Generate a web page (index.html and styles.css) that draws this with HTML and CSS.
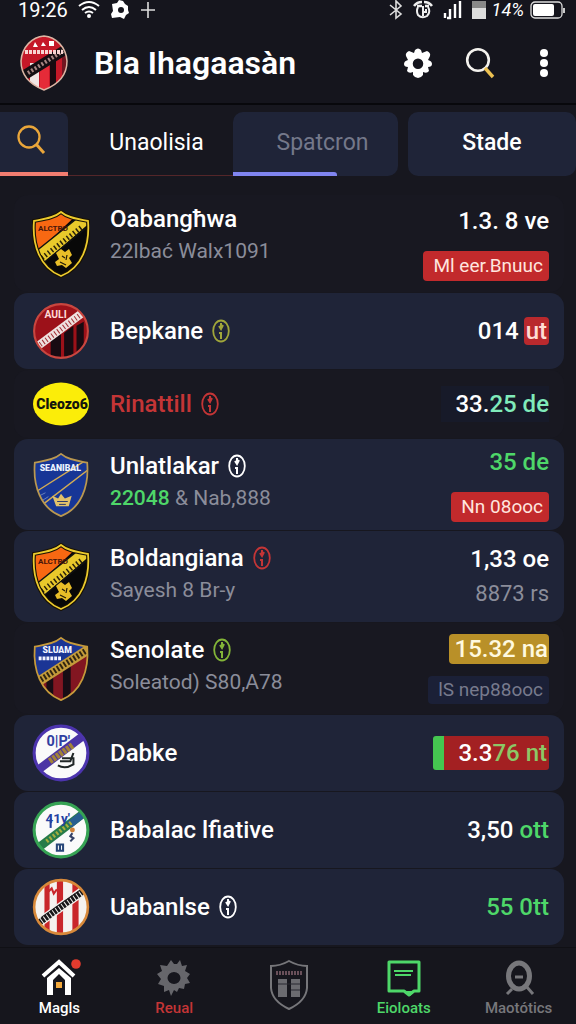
FILE: index.html
```html
<!DOCTYPE html>
<html lang="en">
<head>
<meta charset="utf-8">
<meta name="viewport" content="width=device-width, initial-scale=1">
<title>Bla Ihagaasàn</title>
<link rel="stylesheet" href="styles.css">
</head>
<body>
<svg class="defs" aria-hidden="true">
  <defs>
    <clipPath id="shield"><path d="M29 2C22 8 12 9 2 11C0 35 8 58 29 66C50 58 58 35 56 11C46 9 36 8 29 2Z"/></clipPath>
    <clipPath id="round"><circle cx="28" cy="29" r="26"/></clipPath>
    <symbol id="info" viewBox="0 0 18 24"><ellipse cx="9" cy="12" rx="7.8" ry="10.5" fill="none" stroke="currentColor" stroke-width="1.8"/><path d="M9 4V10M9 13V20M7 7L9 10L11 6M7 14H10" fill="none" stroke="currentColor" stroke-width="2"/></symbol>
    <symbol id="gold-crest" viewBox="0 0 58 68">
      <g clip-path="url(#shield)"><path fill="#080808" d="M0 0H58V68H0Z"/><path fill="#f86812" d="M0 0H50L2 45Z"/><path fill="#e9c92b" d="M-2 46L48 6L60 11L9 55Z"/><path d="M-2 46L48 6M9 55L60 13" stroke="#111" stroke-width="1.5"/><path d="M10 48L51 16" stroke="#29220b" stroke-width="5" stroke-dasharray="1.5 2.5"/></g>
      <path d="M24 43L29 39L33 42L37 39L40 45L37 48L40 53L34 58L30 55L25 56L23 52L27 49Z" fill="#e8be28"/><path d="M30 46L33 48M35 45L34 50M28 52L34 55" fill="none" stroke="#211b0a" stroke-width="1.2"/>
      <text x="6" y="21" font-size="8" font-weight="700" fill="#48150a">ALCTRD</text>
      <path d="M29 2C22 8 12 9 2 11C0 35 8 58 29 66C50 58 58 35 56 11C46 9 36 8 29 2Z" fill="none" stroke="#181104" stroke-width="4"/><path d="M29 2C22 8 12 9 2 11C0 35 8 58 29 66C50 58 58 35 56 11C46 9 36 8 29 2Z" fill="none" stroke="#eccb2d" stroke-width="1.8"/>
    </symbol>
  </defs>
</svg>

<header class="top">
  <div class="status">
    <span class="clock">19:26</span>
    <svg width="22" height="20" viewBox="0 0 22 20" fill="none" stroke="#fff" stroke-width="2"><path d="M1 6Q11-2 21 6M4 10Q11 4 18 10M7 13Q11 10 15 13"/><circle cx="11" cy="16" r="1" fill="#fff"/></svg>
    <svg width="20" height="20" viewBox="0 0 20 20"><path fill="#fff" d="M2 4L7 3L9 0L13 1L15 4L18 6V10L19 13L16 15L14 19L10 17L2 18L1 14L3 11Z"/><circle cx="11" cy="10" r="3" fill="#15151d"/></svg>
    <svg width="16" height="20" viewBox="0 0 16 20" stroke="#ddd" stroke-width="1.6"><path d="M1 10H15M8 2V18"/></svg>
    <span class="spring"></span>
    <svg width="14" height="20" viewBox="0 0 14 20" fill="none" stroke="#ddd" stroke-width="1.6"><path d="M1 5L12 14L7 18V1L12 6L1 15"/></svg>
    <svg width="20" height="20" viewBox="0 0 20 20" fill="none" stroke="#eee"><path d="M5 7Q3 11 5 15Q9 19 14 16Q18 12 15 7" stroke-width="2"/><path stroke-width="2.6" d="M1 6Q4 2 9 2M11 2Q16 2 19 6M4 6H9M12 6H16"/><path stroke-width="2" d="M10 6V16M10 12H13V9"/></svg>
    <svg width="19" height="20" viewBox="0 0 19 20" fill="none" stroke="#fff" stroke-width="2.4"><path d="M2 13V18M7 9V18H4M12 4V18M17 1V18"/></svg>
    <svg width="14" height="18" viewBox="0 0 14 18"><path fill="#888" d="M0 0H14V8H0Z"/><path fill="#ddd" d="M0 7H14V18H0Z"/></svg>
    <span class="charge">14%</span>
    <svg width="36" height="18" viewBox="0 0 36 18"><rect x="1" y="1" width="31" height="16" rx="4" fill="none" stroke="#ddd" stroke-width="1.3"/><rect x="3" y="3" width="21" height="12" rx="2" fill="#fff"/><path d="M34 7V12" stroke="#ccc" stroke-width="2"/></svg>
  </div>
  <div class="bar">
    <svg class="logo" width="48" height="56" viewBox="0 0 48 56" aria-hidden="true">
      <defs><clipPath id="lg"><path d="M24 1C36 2 46 12 47 26C47 41 37 50 24 55C11 50 1 41 1 26C2 12 12 2 24 1Z"/></clipPath></defs>
      <g clip-path="url(#lg)"><path fill="#c51828" d="M0 0H48V56H0Z"/><path fill="#f0e5e4" d="M10 28H19V56H10Z"/><path fill="#190a10" d="M30 20H36V56H30Z"/><path fill="#e52b38" d="M20 30H29V56H20Z"/><path fill="#711520" d="M42 20H48V56H42Z"/><path stroke="#140e12" stroke-width="10" d="M3 41L48 13"/><path stroke="#a88683" stroke-width="4" stroke-dasharray="2 2" d="M8 38L43 16"/><path d="M5 17H43" stroke="#f7d4d1" stroke-width="4" stroke-dasharray="3 1"/><path fill="#fff" d="M13 12L15 7L18 12ZM21 11L23 7L26 11ZM29 6H34V11H29Z"/></g>
      <path d="M24 1C36 2 46 12 47 26C47 41 37 50 24 55C11 50 1 41 1 26C2 12 12 2 24 1Z" fill="none" stroke="#dbb5a4" stroke-width="1.5"/>
    </svg>
    <h1>Bla Ihagaasàn</h1>
    <button class="icon" aria-label="Settings"><svg width="30" height="32" viewBox="0 0 30 32"><path fill="#fff" fill-rule="evenodd" d="M12 3Q15 0 18 3L19 6L24 4Q28 6 27 9L25 13Q29 14 29 17Q29 20 25 20L26 24Q24 27 20 25V28Q18 31 15 31Q12 31 10 28V25Q6 27 4 24L5 20Q1 20 1 17Q1 14 5 13L3 9Q2 6 6 4L11 6ZM15 11.5A5.2 5.2 0 1 0 15 22A5.2 5.2 0 1 0 15 11.5Z"/></svg></button>
    <button class="icon" aria-label="Search"><svg width="30" height="32" viewBox="0 0 30 32" fill="none"><circle cx="13" cy="13" r="10.8" stroke="#f4f2ee" stroke-width="2.6"/><path d="M20 21L28 30" stroke="#ecc152" stroke-width="3.4"/></svg></button>
    <button class="icon more" aria-label="More"><svg width="10" height="30" viewBox="0 0 10 30" fill="#fff"><circle cx="5" cy="5" r="4"/><circle cx="5" cy="15" r="4"/><circle cx="5" cy="25" r="4"/></svg></button>
  </div>
</header>

<nav class="tabs" aria-label="Sections">
  <button class="tab tab-search" aria-label="Find"><svg width="30" height="30" viewBox="0 0 30 30" fill="none" stroke="#eaa63a"><circle cx="13" cy="12" r="10.5" stroke-width="2.3"/><path d="M20 19L28 28" stroke-width="3"/></svg></button>
  <button class="tab tab-plain">Unaolisia</button>
  <button class="tab tab-current">Spatcron</button>
  <button class="tab tab-last">Stade</button>
</nav>

<main>
<ul class="list">
  <li class="row lead flat">
    <svg class="crest" width="58" height="68"><use href="#gold-crest"/></svg>
    <div class="info"><h2>Oabangħwa</h2><p>22lbać Walx1091</p></div>
    <div class="side spaced"><span class="value">1.3. 8 ve</span><span class="badge red">Ml eer.Bnuuc</span></div>
  </li>
  <li class="row">
    <svg class="crest" width="58" height="60" viewBox="0 0 56 58"><g clip-path="url(#round)"><path fill="#9c1119" d="M0 0H56V58H0Z"/><path fill="#180b12" d="M18 38L28 32V58H18ZM31 31L40 24V58H31ZM43 24L50 20V54H43Z"/><path stroke="#eee1df" stroke-width="8" d="M5 44L48 12"/><path stroke="#a23035" stroke-width="5" stroke-dasharray="1 2.5" d="M8 42L46 14"/></g><text x="12" y="16" font-size="10" font-weight="700" fill="#ffd9d5">AULI</text><circle cx="28" cy="29" r="26" fill="none" stroke="#c9463f" stroke-width="2"/></svg>
    <div class="info"><h2>Bepkane <svg class="mark olive" width="18" height="24"><use href="#info"/></svg></h2></div>
    <div class="side"><span class="value">014 <mark>ut</mark></span></div>
  </li>
  <li class="row flat short">
    <svg class="crest" width="58" height="46" viewBox="0 0 58 46"><ellipse cx="29" cy="23" rx="28" ry="21.5" fill="#fbed09"/><text x="30" y="28" text-anchor="middle" font-size="14" font-weight="900" fill="#15160c">Cleozo6</text></svg>
    <div class="info"><h2 class="alert">Rinattill <svg class="mark" width="18" height="24"><use href="#info"/></svg></h2></div>
    <div class="side"><span class="value shade">33.<span class="mint">25 de</span></span></div>
  </li>
  <li class="row double">
    <svg class="crest" width="58" height="66" viewBox="0 0 58 68"><g clip-path="url(#shield)"><path fill="#173696" d="M0 0H58V68H0Z"/><path d="M0 43L54 9M9 55L60 16" stroke="#d0aa55" stroke-width="1.5"/><path d="M5 46L13 42M8 51L16 46" stroke="#6c83bd"/></g><path fill="#e1c16b" d="M20 45L26 48L29 43L33 48L40 45L37 56H24Z"/><path d="M25 51H36M27 54H34" stroke="#29376d"/><text x="7" y="20" font-size="9" font-weight="900" fill="#eaf1ff">SEANIBAL</text><path d="M29 2C22 8 12 9 2 11C0 35 8 58 29 66C50 58 58 35 56 11C46 9 36 8 29 2Z" fill="none" stroke="#ba9850" stroke-width="1.8"/></svg>
    <div class="info"><h2>Unlatlakar <svg class="mark" width="18" height="24"><use href="#info"/></svg></h2><p><span class="green strong">22048</span> &amp; Nab,888</p></div>
    <div class="side spaced"><span class="value green">35 de</span><span class="badge red">Nn 08ooc</span></div>
  </li>
  <li class="row double">
    <svg class="crest" width="58" height="68"><use href="#gold-crest"/></svg>
    <div class="info"><h2>Boldangiana <svg class="mark alert" width="18" height="24"><use href="#info"/></svg></h2><p>Sayesh 8 Br-y</p></div>
    <div class="side"><span class="value">1,33 oe</span><span class="muted">8873 rs</span></div>
  </li>
  <li class="row double flat">
    <svg class="crest" width="58" height="66" viewBox="0 0 58 68"><g clip-path="url(#shield)"><path fill="#1b3595" d="M0 0H58V68H0Z"/><path fill="#821621" d="M0 52L58 12V68H0Z"/><path fill="#170d15" d="M14 40H21V68H14ZM31 30H39V68H31Z"/><path d="M1 50L57 14" stroke="#c39b3a" stroke-width="10"/><path d="M5 47L55 15" stroke="#302511" stroke-width="6" stroke-dasharray="2 2"/></g><text x="10" y="18" font-size="9" font-weight="900" fill="#f2f4ff">SLUAM</text><path d="M6 23H30" stroke="#f2f4ff" stroke-width="4" stroke-dasharray="3 1"/><path d="M29 2C22 8 12 9 2 11C0 35 8 58 29 66C50 58 58 35 56 11C46 9 36 8 29 2Z" fill="none" stroke="#c69a3b" stroke-width="1.8"/></svg>
    <div class="info"><h2>Senolate <svg class="mark lime" width="18" height="24"><use href="#info"/></svg></h2><p>Soleatod) S80,A78</p></div>
    <div class="side medium"><span class="value gold">15.32 na</span><span class="badge navy">lS nep88ooc</span></div>
  </li>
  <li class="row">
    <svg class="crest" width="58" height="60" viewBox="0 0 56 58"><g clip-path="url(#round)"><path fill="#fafafa" d="M0 0H56V58H0Z"/><path d="M5 46L50 12" stroke="#4b34a5" stroke-width="8"/><path d="M17 37L40 21" stroke="#a38339" stroke-width="6" stroke-dasharray="3 1"/></g><path d="M27 37H37L40 29M25 41Q32 45 40 40V33M29 34H38" fill="none" stroke="#202626" stroke-width="2"/><text x="14" y="22" font-size="14" font-weight="700" fill="#3040a1">0|P'</text><circle cx="28" cy="29" r="26" fill="none" stroke="#4c34ae" stroke-width="3"/></svg>
    <div class="info"><h2>Dabke</h2></div>
    <div class="side"><span class="value split">3.3<span class="pale">76 nt</span></span></div>
  </li>
  <li class="row">
    <svg class="crest" width="58" height="60" viewBox="0 0 56 58"><g clip-path="url(#round)"><path fill="#fafafa" d="M0 0H56V58H0Z"/><path d="M5 47L51 12" stroke="#277c49" stroke-width="8"/><path d="M36 24L50 13" stroke="#285f91" stroke-width="7"/><path d="M14 40L39 21" stroke="#a5ad3e" stroke-width="4" stroke-dasharray="2 2"/></g><path d="M24 43H30V49H24ZM27 43V49" fill="none" stroke="#294779" stroke-width="2"/><circle cx="39" cy="29" r="2.4" fill="#cf8138"/><path d="M39 32L37 35L40 37L37 40" fill="none" stroke="#354267" stroke-width="2"/><text x="13" y="22" font-size="13" font-weight="700" fill="#2441a1">41y'</text><path d="M18 18V27" stroke="#2441a1" stroke-width="2"/><circle cx="28" cy="29" r="26" fill="none" stroke="#36a354" stroke-width="3"/></svg>
    <div class="info"><h2>Babalac lfiative</h2></div>
    <div class="side"><span class="value">3,50 <span class="green">ott</span></span></div>
  </li>
  <li class="row">
    <svg class="crest" width="58" height="60" viewBox="0 0 56 58"><g clip-path="url(#round)"><path fill="#f5f2ef" d="M0 0H56V58H0Z"/><path fill="#c9262a" d="M12 0H17V58H12ZM24 0H30V58H24ZM39 0H45V58H39Z"/><path d="M4 46L50 13" stroke="#f2efec" stroke-width="9"/><path d="M7 44L49 14" stroke="#181719" stroke-width="6" stroke-dasharray="2.5 1"/><path d="M9 39L46 13" stroke="#181719"/></g><path d="M16 14L19 11L21 16L24 12" fill="none" stroke="#c9262a" stroke-width="2"/><circle cx="28" cy="29" r="26" fill="none" stroke="#d8893a" stroke-width="2.5"/></svg>
    <div class="info"><h2>Uabanlse <svg class="mark" width="18" height="24"><use href="#info"/></svg></h2></div>
    <div class="side"><span class="value green">55 0tt</span></div>
  </li>
</ul>
</main>

<nav class="bottom" aria-label="Main">
  <a href="#home" class="white"><svg width="46" height="38" viewBox="0 0 46 38"><path d="M7 17L23 3L38 17" fill="none" stroke="#fff" stroke-width="4"/><path fill="#fff" d="M11 19L23 9L35 19V36H29V21L23 15L17 21V36H11Z"/><path fill="#f3a93c" d="M20 23H26V29H20Z"/><circle cx="40" cy="5" r="4.8" fill="#e33b2e"/></svg><span>Magls</span></a>
  <a href="#reual" class="alert"><svg width="34" height="38" viewBox="0 0 34 38"><path fill="#66666b" fill-rule="evenodd" d="M14 1L17 5H20L23 1L25 7L30 6L28 12L33 15L30 19L33 24L28 25L27 30L22 29L20 33L17 31L14 37L12 31L7 33L7 27L1 25L4 20L0 15L5 12L3 6L10 7ZM17 13A6.5 6 0 1 0 17 25A6.5 6 0 1 0 17 13Z"/></svg><span>Reual</span></a>
  <a href="#club" class="center" aria-label="Club"><svg width="40" height="52" viewBox="0 0 40 52"><path d="M20 2Q29 7 38 7V29Q37 42 20 50Q3 42 2 29V7Q11 7 20 2Z" fill="none" stroke="#76767a" stroke-width="2"/><path fill="#6b6b70" d="M9 20H18V38H9ZM22 20H31V38H22Z"/><path d="M9 25H31M22 31H31" stroke="#292930"/><path d="M7 14H33" stroke="#69505a" stroke-width="4" stroke-dasharray="2 1"/></svg></a>
  <a href="#posts" class="green"><svg width="34" height="38" viewBox="0 0 34 38"><path d="M2 3H32V32H27L22 36L17 32H2Z" fill="none" stroke="currentColor" stroke-width="3" stroke-linejoin="round"/><path d="M18 32L23 37L28 32Z" fill="currentColor"/><path d="M7 12H26M8 16H24" stroke="currentColor" stroke-width="2"/></svg><span>Eioloats</span></a>
  <a href="#profile" class="gray"><svg width="34" height="38" viewBox="0 0 34 38"><ellipse cx="17" cy="17" rx="10.5" ry="13" fill="none" stroke="#77777b" stroke-width="5"/><path d="M13 18H21M24 27L31 35M10 30L5 35" stroke="#77777b" stroke-width="3"/></svg><span>Maotótics</span></a>
</nav>
</body>
</html>
```

FILE: styles.css
```css
* { box-sizing: border-box; }
body {
  margin: 0;
  min-height: 100vh;
  display: flex;
  flex-direction: column;
  background: #17171f;
  color: #fff;
  font-family: Roboto, "Noto Sans", sans-serif;
}
svg { flex: none; display: block; }
h1, h2, p, ul { margin: 0; padding: 0; }
button { border: 0; padding: 0; background: none; color: inherit; font: inherit; }
.defs { position: absolute; width: 0; height: 0; }

.top { background: #15151d; border-bottom: 2px solid #08080c; }
.status { display: flex; align-items: center; gap: 10px; height: 20px; padding: 0 10px 0 18px; }
.clock, .charge { font-size: 20px; line-height: 20px; }
.charge { margin: 0 -4px; font-size: 18px; font-style: italic; }
.spring { flex: 1; }
.bar { display: flex; align-items: center; padding: 15px 27px 12px 20px; }
h1 { flex: 1; margin-left: 26px; font-size: 32px; line-height: 56px; font-weight: 600; white-space: nowrap; }
.icon { margin-left: 32px; }
.more { margin-left: 44px; }

.tabs { display: grid; grid-template-columns: 68fr 165fr 165fr 178fr; margin-top: 7px; height: 64px; font-size: 23px; }
.tab { position: relative; border-radius: 10px; background: #1f2438; }
.tab-search { display: grid; place-items: center; padding-right: 7px; padding-bottom: 4px; border-bottom: 4px solid #f27d70; border-radius: 0 8px 0 0; }
.tab-plain { padding: 0 0 2px 12px; background: none; border-bottom: 1px solid #542629; border-radius: 0; }
.tab-current { padding: 0 0 3px 14px; color: #74788a; border-bottom-left-radius: 0; }
.tab-current::after { content: ""; position: absolute; left: 0; bottom: 0; width: 63%; height: 4px; background: #8085f0; border-top-right-radius: 3px; }
.tab-last { margin-left: 10px; padding-bottom: 3px; font-weight: 500; }

.list { display: flex; flex-direction: column; gap: 1px; padding: 19px 12px 0 14px; list-style: none; }
.row { display: flex; align-items: center; min-height: 76px; padding: 0 15px 0 18px; border-radius: 14px; background: #1f2438; }
.flat { background: #181821; }
.short { min-height: 68px; }
.double { min-height: 91px; }
.lead { min-height: 97px; }
.info { flex: 1; min-width: 0; margin-left: 20px; white-space: nowrap; }
.double .info { padding-bottom: 6px; }
.lead .info { padding-bottom: 18px; }
h2 { display: flex; align-items: center; gap: 9px; font-size: 24px; line-height: 32px; font-weight: 500; }
p, .muted { font-size: 21px; line-height: 32px; font-weight: 400; color: #8b8d9a; }
.muted { font-size: 22px; }
.side { display: flex; flex-direction: column; align-items: flex-end; gap: 4px; white-space: nowrap; }
.spaced { gap: 15px; }
.medium { gap: 12px; }
.value { font-size: 24px; line-height: 30px; font-weight: 500; }
.badge { padding: 0 6px 0 10px; border-radius: 4px; font-size: 19px; line-height: 30px; font-weight: 400; }
.red { background: #c22a2c; color: #ffe5df; }
.navy { background: #1b2037; color: #777a8d; line-height: 28px; }
.gold { padding: 0 1px 0 6px; border-radius: 4px; background: #b99028; color: #fff9df; }
mark { margin-left: -1px; padding: 0 2px; border-radius: 4px; background: #b9292d; color: #ffdcd3; }
.shade { padding: 3px 0 3px 14px; background: #171a29; }
.split { padding: 2px 2px 2px 14px; border-left: 11px solid #45c650; border-radius: 3px; background: #a32022; }
.pale { color: #8cc766; }
.mint { color: #80ebba; }
.green { color: #4ed769; }
.strong { font-weight: 500; }
.alert { color: #c43536; }
.olive { color: #a0a63a; }
.lime { color: #83b538; }
.white { color: #fff; }
.gray { color: #77777b; }

.bottom { display: grid; grid-template-columns: repeat(5, 1fr); margin-top: auto; min-height: 77px; padding-left: 2px; background: #16161d; border-top: 1px solid #101015; }
.bottom a { display: flex; flex-direction: column; align-items: center; padding-top: 11px; font-size: 15px; line-height: 20px; font-weight: 500; text-decoration: none; }
.bottom span { margin-top: 1px; }
```
